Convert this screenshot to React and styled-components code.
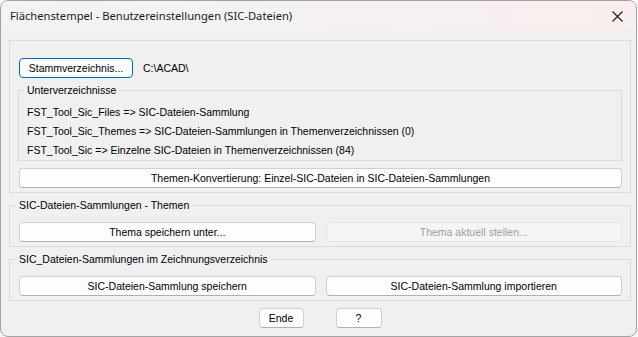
import React from 'react'
import styled, { createGlobalStyle } from 'styled-components'

const Global = createGlobalStyle`
  html, body {
    margin: 0;
    padding: 0;
    background: #f7f7f7;
  }
  * { box-sizing: border-box; }
`

export default function App() {
  return (
    <>
      <Global />
      <Window>
        <TitleBar>
          <Title>Flächenstempel - Benutzereinstellungen (SIC-Dateien)</Title>
          <CloseBtn>
            <svg width="11" height="11" viewBox="0 0 11 11">
              <path d="M0.5 0.5 L10.5 10.5 M10.5 0.5 L0.5 10.5" stroke="#1a1a1a" strokeWidth="1.1" />
            </svg>
          </CloseBtn>
        </TitleBar>

        <Body>
          <Panel>
            <PathRow>
              <Button $focused $width={114}>Stammverzeichnis...</Button>
              <PathText>C:\ACAD\</PathText>
            </PathRow>

            <Group $inner>
              <Legend>Unterverzeichnisse</Legend>
              <Line>FST_Tool_Sic_Files =&gt; SIC-Dateien-Sammlung</Line>
              <Line>FST_Tool_Sic_Themes =&gt; SIC-Dateien-Sammlungen in Themenverzeichnissen (0)</Line>
              <Line>FST_Tool_Sic =&gt; Einzelne SIC-Dateien in Themenverzeichnissen (84)</Line>
            </Group>

            <WideRow>
              <Button $block>Themen-Konvertierung: Einzel-SIC-Dateien in SIC-Dateien-Sammlungen</Button>
            </WideRow>
          </Panel>

          <Group>
            <Legend>SIC-Dateien-Sammlungen - Themen</Legend>
            <ButtonPair>
              <Button>Thema speichern unter...</Button>
              <Button disabled>Thema aktuell stellen...</Button>
            </ButtonPair>
          </Group>

          <Group>
            <Legend>SIC_Dateien-Sammlungen im Zeichnungsverzeichnis</Legend>
            <ButtonPair>
              <Button>SIC-Dateien-Sammlung speichern</Button>
              <Button>SIC-Dateien-Sammlung importieren</Button>
            </ButtonPair>
          </Group>

          <Footer>
            <Button $width={45}>Ende</Button>
            <Button $width={46}>?</Button>
          </Footer>
        </Body>
      </Window>
    </>
  )
}

const Window = styled.div`
  width: 637px;
  height: 337px;
  border: 1px solid #a3a3a3;
  border-radius: 8px;
  background: #f0f0f0;
  overflow: hidden;
  display: flex;
  flex-direction: column;
  font-family: "Liberation Sans", Arial, sans-serif;
  font-size: 10.5px;
  color: #000;
`
const TitleBar = styled.div`
  height: 29px;
  flex: none;
  display: flex;
  align-items: center;
  justify-content: space-between;
  padding: 0 9px 0 9px;
  background: linear-gradient(90deg, #f3f3f3 0%, #f5f1f1 50%, #f9eeee 100%);
`
const Title = styled.span`
  font-family: "Noto Sans", "Open Sans", sans-serif;
  font-size: 11.2px;
  color: #1b1b1b;
`
const CloseBtn = styled.div`
  width: 20px;
  display: flex;
  justify-content: center;
  margin-top: 1px;
`
const Body = styled.div`
  flex: 1;
  display: flex;
  flex-direction: column;
  padding: 10px 5px 0 8px;
`
const Panel = styled.div`
  border: 1px solid #dadada;
  padding: 17px 8px 4px 9px;
  display: flex;
  flex-direction: column;
`
const PathRow = styled.div`
  display: flex;
  align-items: center;
  gap: 10px;
`
const PathText = styled.span`
  font-size: 10.5px;
`
const Group = styled.fieldset`
  margin: ${p => (p.$inner ? '6px 0 0 -1px' : '6px 0 0 0')};
  padding: ${p => (p.$inner ? '6px 0 0 8px' : '10px 8px 4px 9px')};
  border: 1px solid #dadada;
  min-width: 0;
`
const Legend = styled.legend`
  padding: 0 3px;
  margin-left: -3px;
  line-height: 13px;
  font-size: 10.5px;
`
const Line = styled.div`
  height: 19px;
  line-height: 19px;
  white-space: nowrap;
`
const WideRow = styled.div`
  display: flex;
  margin-top: 7px;
`
const ButtonPair = styled.div`
  display: grid;
  grid-template-columns: 1fr 1fr;
  gap: 10px;
`
const Button = styled.button`
  height: 20px;
  width: ${p => (p.$block ? '100%' : p.$width ? `${p.$width}px` : 'auto')};
  padding: 0 6px;
  font-family: "Liberation Sans", Arial, sans-serif;
  font-size: 10.5px;
  color: #000;
  background: #fdfdfd;
  border: 1px solid #d0d0d0;
  border-bottom-color: #b0b0b0;
  border-radius: 4px;
  white-space: nowrap;
  flex: none;
  ${p => p.$focused && `
    border: 1.5px solid #0067c0;
    border-bottom-color: #0067c0;
  `}
  &:disabled {
    background: #f5f5f5;
    border-color: #e5e5e5;
    color: #9d9d9d;
  }
`
const Footer = styled.div`
  display: flex;
  justify-content: center;
  gap: 32px;
  margin-top: 7px;
`
